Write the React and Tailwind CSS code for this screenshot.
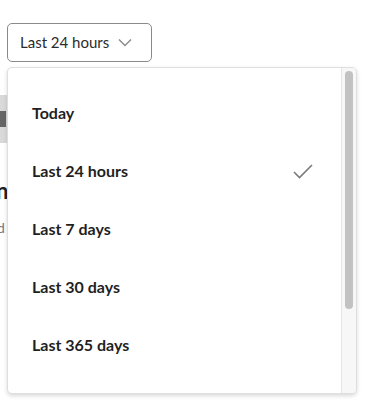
import React from 'react'

const options = ['Today', 'Last 24 hours', 'Last 7 days', 'Last 30 days', 'Last 365 days']

export default function App() {
  const [selected, setSelected] = React.useState('Last 24 hours')

  return (
    <div className="relative w-[365px] h-[404px] overflow-hidden bg-white" style={{ fontFamily: 'Lato, "Noto Sans", sans-serif' }}>
      {/* page content behind the menu */}
      <div className="pt-[23px] pl-[7px]">
        <button className="flex items-center gap-[9px] h-[39px] w-[145px] pl-3 pr-3 border border-[#8a8a8a] rounded-[5px] text-[15px] text-[#2b2b2b]">
          <span>{selected}</span>
          <svg width="14" height="9" viewBox="0 0 14 9" fill="none" stroke="#8a8a8a" strokeWidth="1.4">
            <path d="M1 1.5l6 6 6-6" />
          </svg>
        </button>
      </div>
      <div className="mt-[33px] h-[48px] w-[40px] bg-[#d9d9d9] flex items-center">
        <div className="h-[16px] w-[6px] bg-[#666]" />
      </div>
      <div className="mt-[34px] -ml-[4px] text-[22px] leading-7 font-bold text-[#222]">n</div>
      <div className="mt-[12px] -ml-[3px] text-[14px] text-[#777]">d</div>

      {/* dropdown menu */}
      <div className="absolute top-[67px] left-[7px] w-[350px] h-[327px] bg-white border border-[#dedede] rounded-[5px] shadow-[0_2px_4px_rgba(0,0,0,0.15)] flex overflow-hidden">
        <ul className="flex-1 pt-[16px]">
          {options.map(o => (
            <li
              key={o}
              onClick={() => setSelected(o)}
              className="h-[58px] flex items-center justify-between pl-6 pr-[28px] text-[16px] font-bold text-[#1f1f1f] cursor-pointer"
            >
              <span>{o}</span>
              {o === selected && (
                <svg width="20" height="15" viewBox="0 0 20 15" fill="none" stroke="#7a7a7a" strokeWidth="1.6">
                  <path d="M1 8l5.5 5.5L19 1" />
                </svg>
              )}
            </li>
          ))}
        </ul>
        <div className="w-[15px] bg-[#f7f7f7] border-l border-[#e6e6e6] pt-[3px] px-[3px]">
          <div className="h-[238px] w-full rounded-full bg-[#c2c2c2]" />
        </div>
      </div>
    </div>
  )
}
